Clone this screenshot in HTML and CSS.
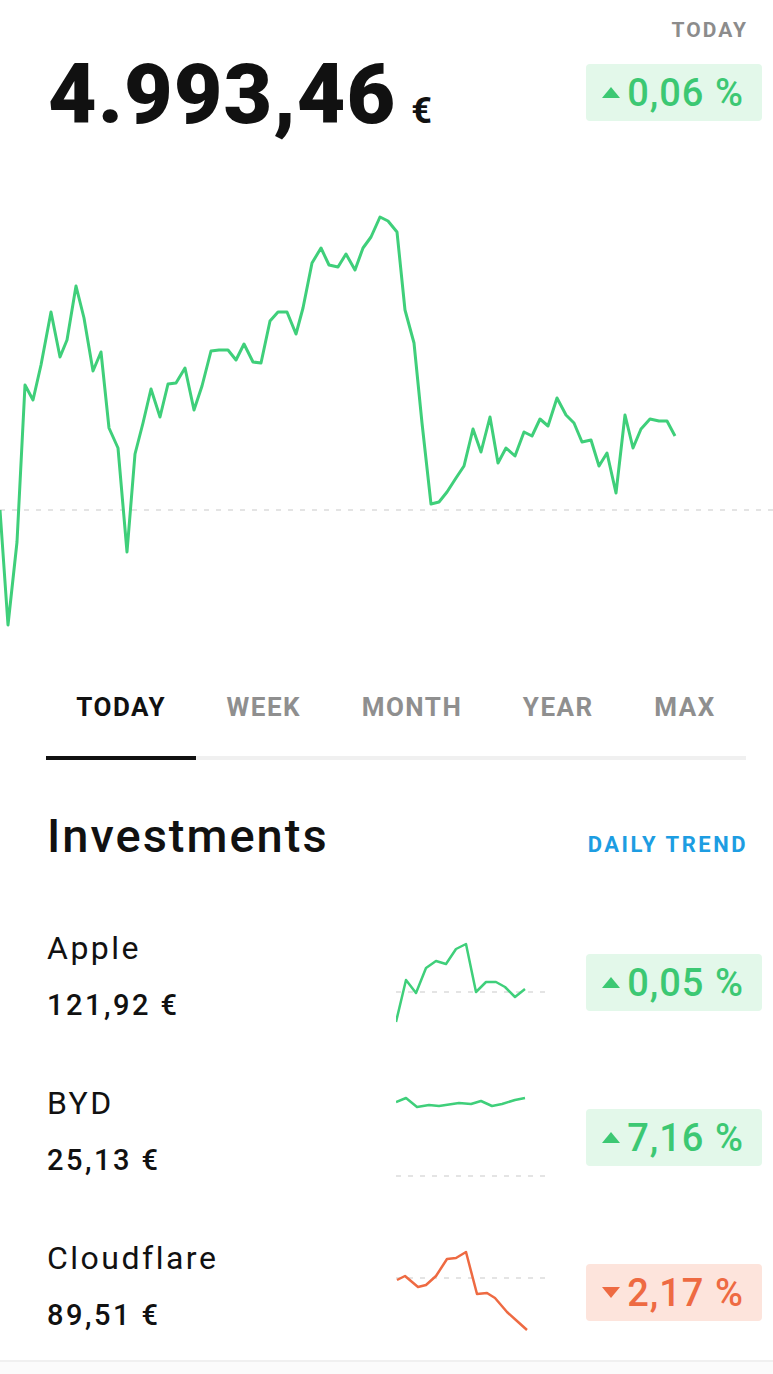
FILE: index.html
```html
<!DOCTYPE html>
<html lang="en">
<head>
    <meta charset="UTF-8">
    <meta name="viewport" content="width=device-width, initial-scale=1.0">
    <title>Portfolio</title>
    <link rel="stylesheet" href="styles.css">
</head>
<body>
    <div class="summary">
        <div class="balance">4.993,46<span class="currency">€</span></div>
        <div class="summary-side">
            <div class="period">TODAY</div>
            <div class="change up"><span class="arrow"></span>0,06 %</div>
        </div>
    </div>

    <!-- Intraday chart -->
    <svg class="chart" width="773" height="460" viewBox="0 180 773 460">
        <line class="baseline" x1="0" y1="510" x2="773" y2="510"/>
        <polyline class="line" points="0,510 8,625 17,542 25,385 33,400 41,365 51,312 60,357 67,340 76,286 84,318 93,371 101,352 109,428 118,448 127,552 135,454 143,423 151,389 160,417 168,384 176,383 185,368 194,410 202,386 211,351 219,350 228,350 236,360 244,344 253,362 261,363 270,321 278,312 287,312 296,334 303,308 312,263 321,248 329,265 338,267 346,254 355,270 363,248 371,237 380,217 388,221 397,232 405,310 414,343 422,423 431,504 439,502 447,492 456,478 464,466 473,429 481,452 490,417 498,463 506,448 515,456 524,432 532,436 540,419 548,426 557,398 566,415 574,423 582,442 591,440 599,466 607,453 616,493 625,415 633,448 641,429 650,419 659,421 667,421 675,436"/>
    </svg>

    <div class="tabs">
        <div class="tab active">TODAY</div>
        <div class="tab">WEEK</div>
        <div class="tab">MONTH</div>
        <div class="tab">YEAR</div>
        <div class="tab">MAX</div>
    </div>

    <div class="section-head">
        <h2>Investments</h2>
        <a href="#">DAILY TREND</a>
    </div>

    <div class="holdings">
        <div class="holding">
            <div class="holding-info">
                <div class="name">Apple</div>
                <div class="price">121,92 €</div>
            </div>
            <svg class="spark" width="151" height="90" viewBox="0 0 151 90">
                <line class="baseline" x1="0" y1="59" x2="151" y2="59"/>
                <polyline class="line" points="0,89 10,47 20,60 30,35 40,28 50,31 60,16 70,11 80,59 90,49 100,49 109,54 119,64 129,56"/>
            </svg>
            <div class="change up"><span class="arrow"></span>0,05 %</div>
        </div>
        <div class="holding">
            <div class="holding-info">
                <div class="name">BYD</div>
                <div class="price">25,13 €</div>
            </div>
            <svg class="spark" width="151" height="90" viewBox="0 0 151 90">
                <line class="baseline" x1="0" y1="88" x2="151" y2="88"/>
                <polyline class="line" points="0,14 10,10 21,19 33,17 43,18 63,15 75,16 85,13 96,18 106,16 119,12 129,10"/>
            </svg>
            <div class="change up"><span class="arrow"></span>7,16 %</div>
        </div>
        <div class="holding">
            <div class="holding-info">
                <div class="name">Cloudflare</div>
                <div class="price">89,51 €</div>
            </div>
            <svg class="spark down" width="151" height="90" viewBox="0 0 151 90">
                <line class="baseline" x1="0" y1="35" x2="151" y2="35"/>
                <polyline class="line" points="1,37 9,33 22,44 30,42 40,33 51,16 60,15 70,9 81,51 91,50 99,55 111,69 121,78 131,87"/>
            </svg>
            <div class="change down"><span class="arrow"></span>2,17 %</div>
        </div>
    </div>

    <div class="footer"></div>
</body>
</html>
```

FILE: styles.css
```css
body {
    margin: 0;
    font-family: Roboto, "Noto Sans", sans-serif;
    color: #111;
    background-color: #fff;
}
.summary {
    display: flex;
    justify-content: space-between;
    align-items: flex-start;
    padding: 20px 11px 0 48px;
    height: 160px;
}
.balance {
    margin-top: 33px;
    font-size: 84px;
    line-height: 84px;
    font-weight: 900;
    letter-spacing: 1px;
}
.currency {
    font-size: 36px;
    line-height: 1;
    font-weight: 700;
    margin-left: 15px;
    letter-spacing: 0;
}
.summary-side {
    display: flex;
    flex-direction: column;
    align-items: flex-end;
}
.period {
    font-size: 21px;
    line-height: 20px;
    font-weight: 700;
    letter-spacing: 2px;
    color: #8c8c8c;
    margin-right: 14px;
}
.summary .change {
    margin-top: 24px;
}
.change {
    display: flex;
    align-items: center;
    justify-content: center;
    width: 176px;
    height: 57px;
    border-radius: 4px;
    font-size: 38px;
    font-weight: 500;
    letter-spacing: 1px;
    box-sizing: border-box;
    padding-right: 2px;
}
.change.up {
    background-color: #e3f8ea;
    color: #3cc873;
}
.change.down {
    background-color: #fde4dc;
    color: #ee6a42;
}
.arrow {
    width: 0;
    height: 0;
    margin-right: 7px;
    border-left: 9px solid transparent;
    border-right: 9px solid transparent;
}
.up .arrow {
    border-bottom: 11px solid #3cc873;
}
.down .arrow {
    border-top: 11px solid #ee6a42;
}

/* Chart */
.chart {
    display: block;
}
.chart .line,
.spark .line {
    fill: none;
    stroke: #3fcf7a;
    stroke-width: 3;
    stroke-linejoin: round;
}
.spark .line {
    stroke-width: 2.5;
}
.spark.down .line {
    stroke: #ee6a42;
}
.baseline {
    stroke: #dcdcdc;
    stroke-width: 1.5;
    stroke-dasharray: 5 7;
}

/* Period tabs */
.tabs {
    display: flex;
    margin: 54px 27px 0 46px;
}
.tab {
    flex: 1 1 auto;
    text-align: center;
    font-size: 26px;
    line-height: 26px;
    font-weight: 700;
    letter-spacing: 1.5px;
    color: #8f8f8f;
    padding-bottom: 36px;
    border-bottom: 4px solid #f0f0f0;
}
.tab.active {
    color: #111;
    border-bottom-color: #111;
}

/* Investments */
.section-head {
    display: flex;
    justify-content: space-between;
    align-items: baseline;
    margin: 53px 27px 0 47px;
}
.section-head h2 {
    margin: 0;
    font-size: 47px;
    line-height: 46px;
    font-weight: 500;
    letter-spacing: 2px;
}
.section-head a {
    font-size: 22px;
    font-weight: 700;
    letter-spacing: 2.5px;
    color: #1d9de2;
    text-decoration: none;
    margin-right: -2px;
}
.holdings {
    display: flex;
    flex-direction: column;
    gap: 65px;
    margin-top: 74px;
}
.holding {
    display: flex;
    align-items: flex-start;
    padding: 0 11px 0 47px;
}
.holding-info {
    flex: 1;
}
.name {
    font-size: 32px;
    line-height: 31px;
    letter-spacing: 2.5px;
}
.price {
    margin-top: 27px;
    font-size: 29px;
    line-height: 29px;
    font-weight: 500;
    letter-spacing: 2.5px;
}
.spark {
    display: block;
}
.holding .change {
    margin: 21px 0 0 39px;
}
.footer {
    margin-top: 27px;
    height: 40px;
    border-top: 2px solid #f0f0f0;
    background-color: #fbfbfb;
}
```
